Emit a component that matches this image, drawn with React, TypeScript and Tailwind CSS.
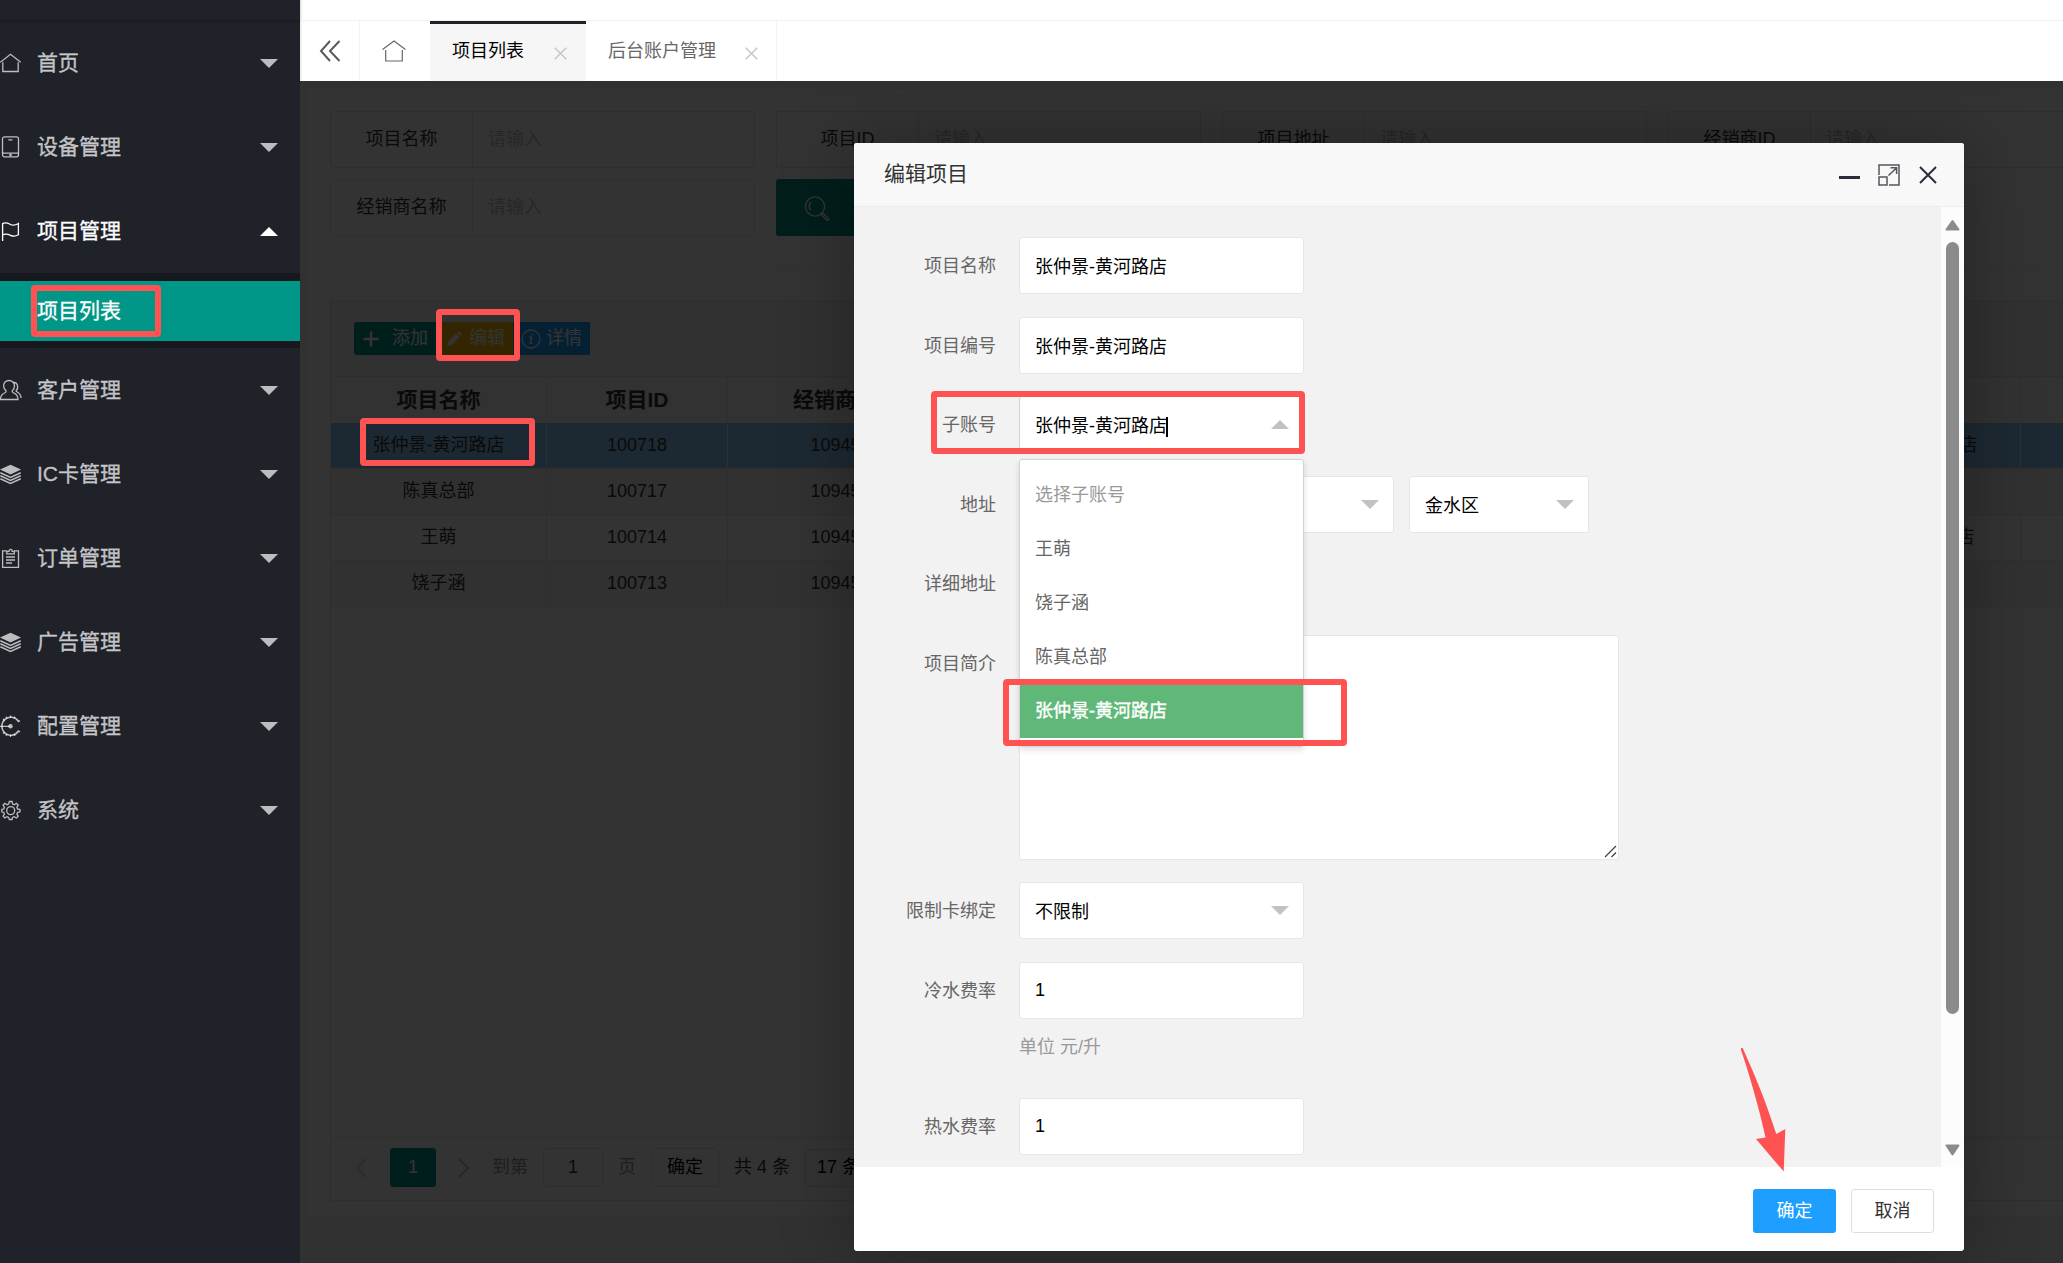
import React from 'react';
import { clsx } from 'clsx';

type IconName = 'home' | 'device' | 'flag' | 'users' | 'layers' | 'order' | 'gauge' | 'gear';

interface MenuItem {
  title: string;
  icon: IconName;
  open?: boolean;
  children?: string[];
}

const MENU: MenuItem[] = [
  { title: '首页', icon: 'home' },
  { title: '设备管理', icon: 'device' },
  { title: '项目管理', icon: 'flag', open: true, children: ['项目列表'] },
  { title: '客户管理', icon: 'users' },
  { title: 'IC卡管理', icon: 'layers' },
  { title: '订单管理', icon: 'order' },
  { title: '广告管理', icon: 'layers' },
  { title: '配置管理', icon: 'gauge' },
  { title: '系统', icon: 'gear' },
];

const ROWS = [
  { name: '张仲景-黄河路店', id: '100718', dealer: '10945', account: '张仲景-黄河路店' },
  { name: '陈真总部', id: '100717', dealer: '10945', account: '陈真总部' },
  { name: '王萌', id: '100714', dealer: '10945', account: '张仲景黄河路店' },
  { name: '饶子涵', id: '100713', dealer: '10945', account: '饶子涵' },
];

const ACCOUNTS = ['王萌', '饶子涵', '陈真总部', '张仲景-黄河路店'];

const ICONS: Record<IconName, React.ReactNode> = {
  home: <path d="M0.3 10.300 10.500 2.300 20.700 10.300M2.800 10.300V19.500H18.200V10.300" />,
  device: (
    <>
      <rect x="2.5" y="0.8" width="16" height="20" rx="2" />
      <path d="M2.5 17.2H18.5M8.3 3.8H12.5" />
      <circle cx="10.5" cy="19" r="0.7" />
    </>
  ),
  flag: <path d="M2.600 21V3.500C6 2 8.500 3.500 10.500 4.500S15.500 5.300 18.400 3.500V14.800C15.500 16.600 12.500 16.300 10.500 15.300S6 13.300 2.600 14.800" />,
  users: (
    <>
      <path d="M9 1.500C5.800 1.500 3.600 3.700 3.600 6.800C3.600 9 4.500 10.700 6 11.700C6.400 12.800 5.800 13.500 4.500 14C1.800 15.100 0.500 17 0.500 20.500H18C18 17 16.600 15.100 13.800 14C12.500 13.500 12 12.800 12.300 11.700C13.800 10.700 14.500 9 14.500 6.800C14.500 3.700 12.200 1.500 9 1.500Z" />
      <path d="M13.500 3.500C17.500 3.100 19.200 9 16 11.700C15.500 13.100 21 13.100 21 19" />
    </>
  ),
  layers: (
    <>
      <path d="M0 6.500 10.500 1.800 21 6.500 10.500 11.500Z" fill="currentColor" stroke="none" />
      <path d="M0.300 9.800 10.500 14.400 20.700 9.800M0.300 12.800 10.500 17.400 20.700 12.800M0.300 15.800 10.500 20.400 20.700 15.800" strokeWidth="1.500" />
    </>
  ),
  order: (
    <>
      <path d="M7 3.800H2.600V20.400H18.500V3.800H14M6.800 6.800V4.400H9C9 1.600 12.200 1.600 12.200 4.400H14.300V6.800Z" />
      <path d="M6 10H15M6 13H15M6 16H12" />
    </>
  ),
  gauge: (
    <>
      <path d="M18.500 6.500A9 9 0 1 0 18.500 16" strokeWidth="1.500" />
      <path d="M0 11.300H10M10.500 0.500V2.700M10.500 19.800V22M3 4 4.500 5.500M3 18.500 4.500 17M18 7 20 5.500M18 15.500 20 17M6 1.700 6.800 3.500M15 1.700 14.200 3.500M6 20.800 6.800 19M15 20.800 14.200 19" />
      <circle cx="10.500" cy="11.300" r="2.200" fill="currentColor" stroke="none" />
    </>
  ),
  gear: (
    <>
      <path d="M9.300 2.500H12L12.600 5L14.200 5.700L16.400 4.300L18.200 6.200L16.900 8.300L17.500 9.900L20 10.500V12.800L17.500 13.500L16.900 15.100L18.200 17.200L16.400 19L14.200 17.700L12.600 18.400L12 20.500H9.300L8.700 18.400L7 17.700L4.900 19L3.100 17.200L4.400 15.100L3.800 13.500L1.800 12.800V10.500L3.800 9.900L4.400 8.300L3.100 6.200L4.900 4.300L7 5.700L8.700 5Z" />
      <circle cx="10.700" cy="11.600" r="4" />
    </>
  ),
};

const MenuIcon: React.FC<{ name: IconName }> = ({ name }) => (
  <svg width="22" height="22" viewBox="0 0 22 22" fill="none" stroke="currentColor" strokeWidth="1.3" className="shrink-0">
    {ICONS[name]}
  </svg>
);

// Small solid triangle shared by the menu and the selects
const Caret: React.FC<{ up?: boolean; className?: string }> = ({ up, className }) => (
  <svg width="18" height="9" viewBox="0 0 18 9" fill="currentColor" className={clsx('shrink-0', className)}>
    <path d={up ? 'M0 9 9 0 18 9Z' : 'M0 0H18L9 9Z'} />
  </svg>
);

const Sidebar: React.FC = () => (
  <aside className="w-[300px] shrink-0 bg-[#20222a] text-[21px] text-white/70 [-webkit-text-stroke:0.3px]">
    <div className="h-[21px] border-b border-black/20 shadow-sm" />
    {MENU.map(item => (
      <div key={item.title}>
        <div className={clsx('flex h-[84px] items-center pr-[22px]', item.open && 'text-white')}>
          <MenuIcon name={item.icon} />
          <span className="ml-[15px] flex-1 pb-px">{item.title}</span>
          <Caret up={item.open} />
        </div>
        {item.children && (
          <div className="bg-[#17181e] pt-2 pb-[7px]">
            {item.children.map(child => (
              <div key={child} className="h-[60px] bg-[#009688] pl-[37px] leading-[60px] text-white">
                {child}
              </div>
            ))}
          </div>
        )}
      </div>
    ))}
  </aside>
);

const CloseMark: React.FC = () => (
  <svg width="13" height="13" viewBox="0 0 13 13" stroke="#c2c2c2" strokeWidth="1.3" className="mt-1">
    <path d="M0.700 0.700 12.300 12.300M12.300 0.700 0.700 12.300" />
  </svg>
);

const TabBar: React.FC = () => (
  <div className="shadow-[inset_3px_0_3px_-2px_rgba(0,0,0,0.12)]">
    <div className="h-[21px] border-b border-[#f3f3f3]" />
    <div className="flex h-[60px] text-[18px]">
      <div className="flex w-[60px] items-center justify-center border-r border-[#f3f3f3]">
        <svg width="22" height="22" viewBox="0 0 22 22" fill="none" stroke="#5a5a5a" strokeWidth="2">
          <path d="M11 1 2 11 11 21M20.500 1 11 11 20.500 21" />
        </svg>
      </div>
      <div className="flex w-[70px] items-center justify-center pr-0.5">
        <svg width="24" height="22" viewBox="0 0 24 22" fill="none" stroke="#666" strokeWidth="1.2">
          <path d="M0.500 9.500 12 1 23.500 9.500M3.700 10V21H20.300V10" />
        </svg>
      </div>
      <div className="flex w-[156px] items-center justify-between border-t-[3px] border-[#20222a] bg-[#f6f6f6] pr-[19px] pb-[3px] pl-[22px] text-black">
        项目列表
        <CloseMark />
      </div>
      <div className="flex w-[191px] items-center justify-between border-r border-[#f3f3f3] pr-[18px] pl-[22px] text-[#666]">
        后台账户管理
        <CloseMark />
      </div>
    </div>
  </div>
);

const SearchField: React.FC<{ label: string }> = ({ label }) => (
  <div className="flex h-[57px] w-[425px] shrink-0 items-center rounded-[3px] border border-[#e6e6e6]">
    <div className="flex h-full w-[142px] items-center justify-center border-r border-[#e6e6e6]">{label}</div>
    <div className="pl-[15px] text-[#c4c4c4]">请输入</div>
  </div>
);

const cell = 'flex h-full shrink-0 items-center justify-center border-r border-[#e6e6e6]';

const ProjectTable: React.FC = () => (
  <div className="flex h-[901px] w-[1790px] flex-col border border-[#e6e6e6]">
    <div className="flex h-[76px] shrink-0 items-center border-b border-[#e6e6e6] bg-[#f6f6f6] pl-[23px] text-white">
      <div className="flex h-[33px] w-[82px] items-center rounded-l-[3px] bg-[#009688] pl-[9px]">
        <svg width="16" height="16" viewBox="0 0 16 16" stroke="currentColor" strokeWidth="2.5" className="mr-[13px]">
          <path d="M8 0.500V15.500M0.500 8H15.500" />
        </svg>
        添加
      </div>
      <div className="flex h-[33px] w-[77px] items-center bg-[#ffb800] pl-2.5">
        <svg width="16" height="16" viewBox="0 0 16 16" fill="currentColor" className="mr-[7px]">
          <path d="M1 15 2 10.500 10 2.500 13.500 6 5.500 14ZM11 1.500 12 0.500C13 -0.300 16.300 3 15.500 4L14.500 5Z" />
        </svg>
        编辑
      </div>
      <div className="flex h-[33px] w-[77px] items-center bg-[#1e9fff] pl-2">
        <svg width="20" height="20" viewBox="0 0 20 20" fill="none" stroke="currentColor" strokeWidth="1.3" className="mr-[5px]">
          <circle cx="10" cy="10" r="9" />
          <path d="M8.300 8.300H10.500L9.300 14.200H11.500M10.800 5V6.300" strokeWidth="1.500" />
        </svg>
        详情
      </div>
    </div>
    <div className="flex h-[46px] shrink-0 bg-[#f8f8f8] text-[21px] font-bold">
      <div className={clsx(cell, 'w-[216px]')}>项目名称</div>
      <div className={clsx(cell, 'w-[181px]')}>项目ID</div>
      <div className={clsx(cell, 'w-[215px]')}>经销商ID</div>
      <div className={clsx(cell, 'w-[860px]')} />
      <div className={clsx(cell, 'w-[218px]')} />
    </div>
    {ROWS.map((row, i) => (
      <div
        key={row.id}
        className={clsx('flex h-[46px] shrink-0 border-b border-[#e6e6e6]', i === 0 ? 'bg-[#90caf9]' : i % 2 ? 'bg-[#f2f2f2]' : 'bg-white')}
      >
        <div className={clsx(cell, 'w-[216px]')}>{row.name}</div>
        <div className={clsx(cell, 'w-[181px]')}>{row.id}</div>
        <div className={clsx(cell, 'w-[216px]')}>{row.dealer}</div>
        <div className={clsx(cell, 'w-[859px]')} />
        <div className={clsx(cell, 'w-[218px]')}>{row.account}</div>
      </div>
    ))}
    <div className="mt-auto flex h-[63px] shrink-0 items-start border-t border-[#e6e6e6] pt-2.5 pl-6">
      <div className="flex h-[39px] items-center">
        <svg width="12" height="20" viewBox="0 0 12 20" fill="none" stroke="#d2d2d2" strokeWidth="2">
          <path d="M11 1 2 10 11 19" />
        </svg>
        <div className="ml-[23px] flex h-[39px] w-[46px] items-center justify-center rounded-[3px] bg-[#009688] text-white">1</div>
        <svg width="12" height="20" viewBox="0 0 12 20" fill="none" stroke="#c2c2c2" strokeWidth="2" className="ml-[22px]">
          <path d="M1 1 10 10 1 19" />
        </svg>
        <span className="ml-[22px] text-[#999]">到第</span>
        <div className="ml-[15px] flex h-[39px] w-[60px] items-center justify-center rounded-[3px] border border-[#e2e2e2]">1</div>
        <span className="ml-[15px] text-[#999]">页</span>
        <div className="ml-[15px] flex h-[39px] w-[68px] items-center justify-center rounded-[3px] border border-[#e2e2e2] text-black">确定</div>
        <span className="ml-[15px] text-[#333]">共 4 条</span>
        <div className="ml-[15px] flex h-[38px] w-[120px] items-center rounded-[3px] border border-[#e2e2e2] pl-[11px] text-black">17 条/页</div>
      </div>
    </div>
  </div>
);

const ProjectPage: React.FC = () => (
  <div className="pt-2 pl-[7px] text-[18px] text-[#333]">
    <div className="h-[1127px] w-[1830px] rounded-[3px] bg-white">
      <div className="border-b border-[#f0f0f0] px-[23px] pt-[22px] pb-[33px]">
        <div className="flex gap-[21px]">
          <SearchField label="项目名称" />
          <SearchField label="项目ID" />
          <SearchField label="项目地址" />
          <SearchField label="经销商ID" />
        </div>
        <div className="mt-[11px] flex gap-[21px]">
          <SearchField label="经销商名称" />
          <div className="flex h-[57px] w-[82px] items-center justify-center rounded-[3px] bg-[#009688]">
            <svg width="26" height="26" viewBox="0 0 26 26" fill="none" stroke="#fff" strokeWidth="1.4">
              <circle cx="11" cy="11.500" r="9.600" />
              <path d="M7 7C5.300 9 5 12.500 6.500 15M17 19.500 18.500 18 24.500 23.500C25.500 25 24 26 23 25.200Z" />
            </svg>
          </div>
        </div>
      </div>
      <div className="pt-[30px] pl-[23px]">
        <ProjectTable />
      </div>
    </div>
  </div>
);

const FormRow: React.FC<{ label: string; className?: string; children?: React.ReactNode }> = ({ label, className, children }) => (
  <div className={clsx('flex min-h-[57px]', className)}>
    <div className="mr-[23px] h-[57px] w-[142px] shrink-0 text-right leading-[58px] text-[#666]">{label}</div>
    {children}
  </div>
);

const box = 'relative flex h-[57px] shrink-0 items-center rounded-[3px] border bg-white pl-[15px] text-black';

const TextBox: React.FC<{ value: string; numeric?: boolean }> = ({ value, numeric }) => (
  <div className={clsx(box, 'w-[285px] border-[#e6e6e6]', numeric ? 'pb-px' : 'pt-1')}>{value}</div>
);

const SelectBox: React.FC<{ value: string; open?: boolean; wide?: boolean }> = ({ value, open, wide }) => (
  <div className={clsx(box, 'justify-between pr-[14px]', wide ? 'w-[285px]' : 'w-[180px]', open ? 'border-[#d2d2d2]' : 'border-[#e6e6e6]')}>
    <span className="flex items-center pt-1">
      {value}
      {open && <i className="-ml-px h-5 w-0.5 bg-black" />}
    </span>
    <Caret up={open} className="text-[#c2c2c2]" />
  </div>
);

const EditDialog: React.FC = () => (
  <div className="absolute top-[62px] left-[554px] flex h-[1108px] w-[1110px] flex-col overflow-hidden rounded-[3px] bg-white">
    <header className="flex h-[64px] shrink-0 items-center border-b border-[#eee] bg-[#f8f8f8] pr-[27px] pl-[30px]">
      <h3 className="flex-1 pb-px text-[21px] text-[#333]">编辑项目</h3>
      <div className="flex items-center text-[#2d2c3b]">
        <i className="mt-[5px] mr-[18px] h-[3px] w-[21px] bg-current" />
        <svg width="22" height="22" viewBox="0 0 22 22" fill="none" stroke="currentColor" strokeWidth="1.500" className="mt-px mr-[19px] opacity-80">
          <path d="M1 11V1H21V21H11M1 13H9V21H1ZM10.500 11.500 18.500 4M12.500 3.800H18.600V10" />
        </svg>
        <svg width="18" height="18" viewBox="0 0 18 18" stroke="currentColor" strokeWidth="2" className="mt-px">
          <path d="M1 1 17 17M17 1 1 17" />
        </svg>
      </div>
    </header>

    <div className="flex h-[960px] shrink-0 overflow-hidden">
      <div className="flex-1 bg-[#f2f2f2] pt-[30px] text-[18px]">
        <FormRow label="项目名称"><TextBox value="张仲景-黄河路店" /></FormRow>
        <FormRow label="项目编号" className="mt-[23px]"><TextBox value="张仲景-黄河路店" /></FormRow>
        <FormRow label="子账号" className="mt-[22px]">
          <div className="relative">
            <SelectBox value="张仲景-黄河路店" open wide />
            <ul className="absolute top-[63px] left-0 z-10 w-[285px] rounded-[3px] border border-[#d2d2d2] bg-white py-2 shadow-[0_3px_6px_rgba(0,0,0,0.12)]">
              <li className="h-[54px] pl-[15px] leading-[54px] text-[#999]">选择子账号</li>
              {ACCOUNTS.map((name, i) => (
                <li
                  key={name}
                  className={clsx(
                    'h-[54px] pl-[15px] leading-[54px]',
                    i === ACCOUNTS.length - 1 ? 'bg-[#5fb878] text-white [-webkit-text-stroke:0.4px]' : 'text-[#666]'
                  )}
                >
                  {name}
                </li>
              ))}
            </ul>
          </div>
        </FormRow>
        <FormRow label="地址" className="mt-[23px]">
          <div className="flex gap-[15px]">
            <SelectBox value="" />
            <SelectBox value="" />
            <SelectBox value="金水区" />
          </div>
        </FormRow>
        <FormRow label="详细地址" className="mt-[22px]" />
        <FormRow label="项目简介" className="mt-[23px]">
          <div className="flex h-[225px] w-[600px] items-end justify-end rounded-[3px] border border-[#e6e6e6] bg-white p-px">
            <svg width="13" height="13" viewBox="0 0 13 13" stroke="#444" strokeWidth="1.300">
              <path d="M1 12 12 1M7.500 12 12 7.500" />
            </svg>
          </div>
        </FormRow>
        <FormRow label="限制卡绑定" className="mt-[22px]"><SelectBox value="不限制" wide /></FormRow>
        <FormRow label="冷水费率" className="mt-[23px]"><TextBox value="1" numeric /></FormRow>
        <div className="mt-[7px] h-[42px] pl-[165px] leading-[42px] text-[#999]">单位 元/升</div>
        <FormRow label="热水费率" className="mt-[30px]"><TextBox value="1" numeric /></FormRow>
      </div>
      <div className="flex w-[23px] flex-col items-center bg-[#fcfcfc] pt-3 text-[#8b8b8b]">
        <svg width="15" height="12" viewBox="0 0 15 12" fill="currentColor" stroke="currentColor" strokeWidth="2" strokeLinejoin="round">
          <path d="M7.500 2 13.500 10.500H1.500Z" />
        </svg>
        <div className="mt-[11px] h-[772px] w-[13px] rounded-full bg-current" />
        <svg width="15" height="12" viewBox="0 0 15 12" fill="currentColor" stroke="currentColor" strokeWidth="2" strokeLinejoin="round" className="mt-[130px]">
          <path d="M7.500 10.500 13.500 1.500H1.500Z" />
        </svg>
      </div>
    </div>

    <footer className="flex flex-1 items-start justify-end gap-[15px] pt-[22px] pr-[30px] text-[18px]">
      <button className="h-[44px] w-[83px] rounded-[3px] bg-[#1e9fff] text-white">确定</button>
      <button className="h-[44px] w-[83px] rounded-[3px] border border-[#dedede] bg-white text-[#333]">取消</button>
    </footer>
  </div>
);

const mark = 'pointer-events-none absolute z-20 rounded-[4px] border-[6px] border-[#ff5353]';

// Hand-drawn guide marks that lie over the whole screen
const GuideMarks: React.FC = () => (
  <>
    <div className={clsx(mark, 'top-[285px] left-[31px] h-[52px] w-[130px]')} />
    <div className={clsx(mark, 'top-[309px] left-[436px] h-[52px] w-[84px]')} />
    <div className={clsx(mark, 'top-[418px] left-[360px] h-[48px] w-[175px]')} />
    <div className={clsx(mark, 'top-[391px] left-[931px] h-[63px] w-[374px]')} />
    <div className={clsx(mark, 'top-[679px] left-[1003px] h-[67px] w-[344px]')} />
    <svg width="45" height="124" viewBox="0 0 45 124" fill="#ff5353" className="pointer-events-none absolute top-[1048px] left-[1741px] z-20">
      <path d="M0 0H1.700C9 17 22 44 35.300 86L44.300 81 42.700 123.500 15 91 24.500 89.500C19 64 9 28 0 2Z" />
    </svg>
  </>
);

export default function App() {
  return (
    <div className="relative flex h-[1263px] w-[2063px] overflow-hidden bg-white font-['Liberation_Sans','Noto_Sans_CJK_SC',sans-serif]">
      <Sidebar />
      <main className="flex min-w-0 flex-1 flex-col">
        <TabBar />
        <div className="relative flex-1 overflow-hidden bg-[#f2f2f2]">
          <ProjectPage />
          <div className="absolute inset-0 bg-black/80" />
          <div className="absolute top-[62px] left-[554px] h-[1108px] w-[1110px] rounded-[3px] shadow-[1px_1px_75px_rgba(0,0,0,0.3)]" />
          <EditDialog />
        </div>
      </main>
      <GuideMarks />
    </div>
  );
}
